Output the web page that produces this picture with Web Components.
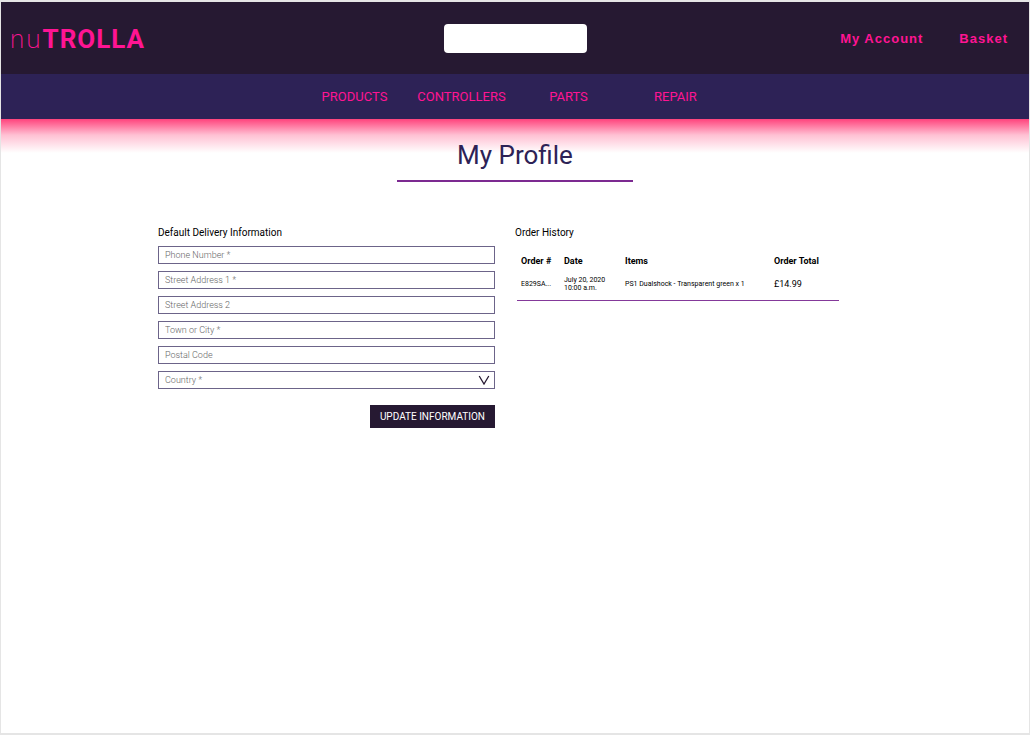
<!DOCTYPE html>
<html lang="en">
<head>
<meta charset="utf-8">
<meta name="viewport" content="width=device-width, initial-scale=1">
<title>nuTROLLA - My Profile</title>
<style>
  :root {
    --ink: #261932;
    --indigo: #2d2256;
    --pink: #ff1493;
    --glow: #ff437c;
    --purple: #7c2a91;
  }
  html, body { height: 100%; margin: 0; }
  body {
    box-sizing: border-box;
    padding: 2px 1px;
    background: #e5e5e5;
    color: #000;
    font-family: Roboto, "Liberation Sans", sans-serif;
  }
</style>
</head>
<body>
<shop-page>
  <shop-header slot="header"></shop-header>
  <shop-nav slot="nav"></shop-nav>
  <page-title>My Profile</page-title>
  <profile-columns>
    <delivery-form slot="form"></delivery-form>
    <order-history slot="history"></order-history>
  </profile-columns>
</shop-page>

<script>
  function define(name, html) {
    const template = document.createElement('template');
    template.innerHTML = html;
    customElements.define(name, class extends HTMLElement {
      constructor() {
        super();
        this.attachShadow({ mode: 'open' }).append(template.content.cloneNode(true));
      }
    });
  }

  define('shop-page', `
    <style>
      :host { display: flex; flex-direction: column; min-height: 100%; background: #fff; }
      main { flex: 1; padding-top: 20px; background: linear-gradient(var(--glow), #ffc0d3 16px, #fff 34px); }
    </style>
    <slot name="header"></slot>
    <slot name="nav"></slot>
    <main><slot></slot></main>
  `);

  define('shop-header', `
    <style>
      :host { display: block; background: var(--ink); }
      header { display: grid; grid-template-columns: minmax(0, 1fr) auto minmax(0, 1fr); align-items: center; min-height: 72px; }
      a { color: var(--pink); text-decoration: none; }
      .brand { padding: 2px 0 0 9px; }
      .logo { font-size: 26px; line-height: 32px; font-weight: 200; letter-spacing: 2px; }
      .logo b { font-weight: 700; letter-spacing: 1px; }
      form { margin: 0; }
      input { display: block; box-sizing: border-box; width: 143px; height: 29px; border: 0; border-radius: 4px; padding: 0 8px; background: #fff; font: 13px Roboto, sans-serif; }
      .links { display: flex; justify-content: flex-end; gap: 36px; padding: 2px 21px 0 0; font: 700 13px/16px "Liberation Sans", Arial, sans-serif; letter-spacing: 1px; }
    </style>
    <header>
      <div class="brand"><a class="logo" href="#">nu<b>TROLLA</b></a></div>
      <form role="search"><input type="search" aria-label="Search"></form>
      <div class="links"><a href="#account">My Account</a><a href="#basket">Basket</a></div>
    </header>
  `);

  define('shop-nav', `
    <style>
      :host { display: block; background: var(--indigo); }
      nav { display: grid; grid-template-columns: repeat(4, 107px); justify-content: center; align-items: center; min-height: 45px; font-size: 13px; line-height: 16px; text-align: center; }
      a { color: var(--pink); text-decoration: none; }
    </style>
    <nav>
      <a href="#products">PRODUCTS</a>
      <a href="#controllers">CONTROLLERS</a>
      <a href="#parts">PARTS</a>
      <a href="#repair">REPAIR</a>
    </nav>
  `);

  define('page-title', `
    <style>
      :host { display: block; }
      h1 { width: 236px; margin: 0 auto; padding-bottom: 9px; border-bottom: 2px solid var(--purple); color: var(--indigo); font-size: 26px; line-height: 32px; font-weight: 400; text-align: center; }
    </style>
    <h1><slot></slot></h1>
  `);

  define('profile-columns', `
    <style>
      :host { display: grid; grid-template-columns: 337px 1fr; gap: 20px; max-width: 714px; margin: 45px auto 0; }
    </style>
    <slot name="form"></slot>
    <slot name="history"></slot>
  `);

  define('delivery-form', `
    <style>
      :host { display: block; }
      h2 { margin: 0 0 7px; font-size: 10px; line-height: 12px; font-weight: 400; }
      form { display: flex; flex-direction: column; gap: 7px; }
      input, select {
        display: block; box-sizing: border-box; width: 100%; height: 18px; margin: 0; padding: 0 6px;
        border: 1px solid #6c6489; border-radius: 0; background: #fff;
        color: #666; font: 300 9px/16px Roboto, sans-serif;
      }
      input::placeholder { color: #666; opacity: 1; }
      .pick { display: grid; align-items: center; }
      .pick > * { grid-area: 1 / 1; }
      select { appearance: none; }
      svg { justify-self: end; margin-right: 5px; pointer-events: none; }
      button { align-self: flex-end; margin-top: 9px; height: 23px; padding: 0 10px; border: 0; background: var(--ink); color: #fff; font: 400 10px/12px Roboto, sans-serif; }
    </style>
    <h2>Default Delivery Information</h2>
    <form>
      <input type="tel" aria-label="Phone Number" placeholder="Phone Number *">
      <input type="text" aria-label="Street Address 1" placeholder="Street Address 1 *">
      <input type="text" aria-label="Street Address 2" placeholder="Street Address 2">
      <input type="text" aria-label="Town or City" placeholder="Town or City *">
      <input type="text" aria-label="Postal Code" placeholder="Postal Code">
      <div class="pick">
        <select aria-label="Country"><option>Country *</option></select>
        <svg width="12" height="10" viewBox="0 0 12 10" fill="none" stroke="#261932" stroke-width="1.3" aria-hidden="true"><path d="M1.2 1 6 9 10.8 1"/></svg>
      </div>
      <button type="button">UPDATE INFORMATION</button>
    </form>
  `);

  define('order-history', `
    <style>
      :host { display: block; }
      h2 { margin: 0 0 14px; font-size: 10px; line-height: 12px; font-weight: 400; }
      table { width: 322px; margin-left: 2px; border-collapse: collapse; table-layout: fixed; text-align: left; }
      tbody tr { border-bottom: 1px solid #84399a; }
      th, td { box-sizing: border-box; padding: 0 0 0 4px; }
      th { height: 19px; padding-bottom: 3px; font-size: 9px; line-height: 10px; font-weight: 700; }
      td { height: 28px; padding-bottom: 4px; font-size: 7px; line-height: 8px; }
      td.total { font-size: 9px; }
      .id { width: 43px; } .date { width: 61px; } .items { width: 149px; }
    </style>
    <h2>Order History</h2>
    <table>
      <thead>
        <tr><th class="id">Order #</th><th class="date">Date</th><th class="items">Items</th><th>Order Total</th></tr>
      </thead>
      <tbody>
        <tr><td>E829SA...</td><td>July 20, 2020<br>10:00 a.m.</td><td>PS1 Dualshock - Transparent green x 1</td><td class="total">£14.99</td></tr>
      </tbody>
    </table>
  `);
</script>
</body>
</html>
